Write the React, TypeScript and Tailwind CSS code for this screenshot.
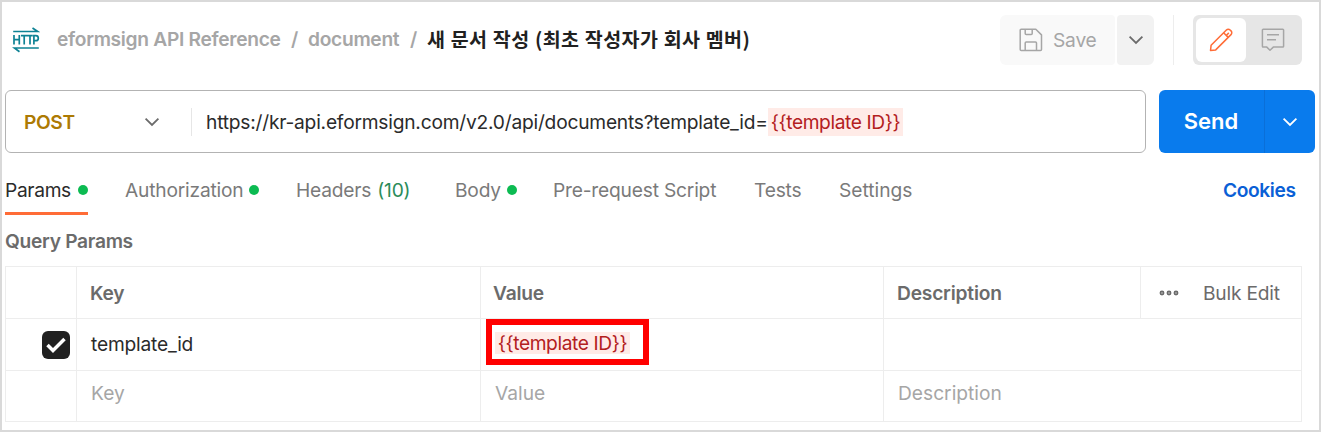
import type { ReactNode } from "react";

function Chevron({ className }: { className: string }) {
  return (
    <svg className={className} width="16" height="10" viewBox="0 0 16 10" fill="none" stroke="currentColor" strokeWidth="1.8">
      <path d="M1.6 1.6 8 8l6.4-6.4" />
    </svg>
  );
}

function HttpIcon() {
  return (
    <svg width="28" height="26" viewBox="0 0 28 26" fill="none" stroke="#0e8294" strokeWidth="1.7">
      <path d="M1.200 4.500h24.500L20.500 1M26.800 21H2.400L7.500 24.700" />
      <path d="M2 8v9.500M7.300 8v9.500M2 12.700h5.300M9 8.700h6.500M12.200 8.700v8.800M15.500 8.700h5.300M18 8.700v8.800M21.900 17.500V8.700h2a2.400 2.500 0 0 1 0 5h-2" />
    </svg>
  );
}

function SaveIcon() {
  return (
    <svg width="24" height="24" viewBox="0 0 24 24" fill="none" stroke="#a6a6a6" strokeWidth="1.5" strokeLinejoin="round">
      <path d="M1.200 2.200a1 1 0 0 1 1-1h14.600l5.700 5.700v14.600a1 1 0 0 1-1 1H2.200a1 1 0 0 1-1-1z" />
      <path d="M6.200 1.200v4.200a1 1 0 0 0 1 1h5a1 1 0 0 0 1-1V1.200M6.200 22.500v-7.600a1 1 0 0 1 1-1h9.300a1 1 0 0 1 1 1v7.600" />
    </svg>
  );
}

function PencilIcon() {
  return (
    <svg width="24" height="24" viewBox="0 0 24 24" fill="none" stroke="#ff6c37" strokeWidth="1.5" strokeLinejoin="round">
      <path d="M1.500 22.500l.6-5.200L17.400 2a2.600 2.600 0 0 1 3.700 0l.9.900a2.600 2.600 0 0 1 0 3.700L6.700 21.900z" />
      <path d="M14.600 4.800l4.600 4.600M17.500 7.200l2.300-2.300" />
    </svg>
  );
}

function CommentIcon() {
  return (
    <svg width="24" height="24" viewBox="0 0 24 24" fill="none" stroke="#a6a6a6" strokeWidth="1.500" strokeLinejoin="round">
      <path d="M2.200 1.300h19.600a.8.8 0 0 1 .8.8v16.200a.8.800 0 0 1-.8.800h-9.500L9 22.300l-3.200-3.200H2.200a.8.800 0 0 1-.8-.8V2.100a.8.800 0 0 1 .8-.8z" />
      <path d="M6 6.800h12M6 11.700h9" />
    </svg>
  );
}

function Dot() {
  return <span className="size-[10px] shrink-0 rounded-full bg-[#0cbb52]" />;
}

function Tab({ children, dot }: { children: ReactNode; dot?: boolean }) {
  return (
    <div className="flex h-[50px] items-center gap-[6px] whitespace-nowrap text-[#7a7a7a]">
      {children}
      {dot && <Dot />}
    </div>
  );
}

export default function App() {
  return (
    <div className="flex h-[432px] w-[1321px] flex-col overflow-hidden border-2 border-[#d9d9d9] bg-white pl-[3px] font-['Inter','Noto_Sans_CJK_KR',sans-serif] text-[19.2px] leading-6 tracking-[-0.2px] text-[#2b2b2b]">
      <header className="flex h-[88px] pr-[17px]">
        <div className="flex h-[75px] flex-1 items-center whitespace-nowrap font-semibold tracking-[-0.3px] text-[#a6a6a6]">
          <div className="w-[52px] pl-[7px]">
            <HttpIcon />
          </div>
          <span className="w-[234px] pb-px">eformsign API Reference</span>
          <span className="w-[17px] pb-px">/</span>
          <span className="w-[102px] pb-px">document</span>
          <span className="w-[17px] pb-px">/</span>
          <span className="pb-[2px] font-['Noto_Sans_CJK_KR',sans-serif] text-[19.5px] font-bold tracking-[0.4px] text-[#212121] [word-spacing:0.6px]">
            새 문서 작성 (최초 작성자가 회사 멤버)
          </span>
        </div>
        <div className="mt-[12.5px] flex h-[50px]">
          <button className="flex h-[50px] w-[115px] items-center gap-[10px] rounded-l-md rounded-r-sm bg-[#f9f9f9] pl-[19px] text-[#a6a6a6]">
            <SaveIcon />
            Save
          </button>
          <button className="ml-[2px] flex h-[50px] w-[37px] items-center justify-center rounded-l-sm rounded-r-md bg-[#f2f2f2]">
            <Chevron className="text-[#6b6b6b]" />
          </button>
          <div className="ml-[19px] h-[50px] w-px bg-[#ededed]" />
          <div className="ml-[19px] flex h-[50px] w-[109px] rounded-md bg-[#e6e6e6] p-[3px]">
            <div className="flex h-11 w-[50px] items-center justify-center rounded-md bg-white">
              <PencilIcon />
            </div>
            <div className="flex flex-1 items-center justify-center">
              <CommentIcon />
            </div>
          </div>
        </div>
      </header>

      <div className="flex h-[63px] gap-[13px] pr-[4px]">
        <div className="flex w-[1141px] items-center rounded-md border border-[#b3b3b3]">
          <span className="w-[138px] pl-[18px] font-semibold tracking-[-0.4px] text-[#ad7a03]">POST</span>
          <Chevron className="text-[#6b6b6b]" />
          <div className="ml-[31px] h-7 w-px bg-[#e6e6e6]" />
          <span className="ml-[14px] w-[562px] whitespace-nowrap tracking-[-0.22px]">
            https://kr-api.eformsign.com/v2.0/api/documents?template_id=
          </span>
          <span className="flex h-7 w-[135px] items-center justify-center whitespace-nowrap bg-[#ffebe7] tracking-[-0.4px] text-[#b3201e]">
            {"{{template ID}}"}
          </span>
        </div>
        <div className="flex w-[156px] rounded-md bg-[#097bed] text-white">
          <div className="flex w-[106px] items-center justify-center border-r border-[#0a6fd8] pb-[2px] pr-px text-[22px] font-semibold tracking-normal">
            Send
          </div>
          <div className="flex flex-1 items-center justify-center">
            <Chevron className="text-white" />
          </div>
        </div>
      </div>

      <nav className="grid h-[62px] grid-cols-[120px_171px_159px_98px_201px_85px_384px_80px] items-start pt-[12px]">
        <div className="flex h-[50px] w-[83px] items-center justify-between border-b-[3px] border-[#ff6c37] pt-[3px] tracking-[-0.35px]">
          Params
          <Dot />
        </div>
        <Tab dot>Authorization</Tab>
        <Tab>
          Headers<span className="text-[#2c8c5a]">(10)</span>
        </Tab>
        <Tab dot>Body</Tab>
        <Tab>Pre-request Script</Tab>
        <Tab>Tests</Tab>
        <div className="tracking-normal">
          <Tab>Settings</Tab>
        </div>
        <div className="flex h-[50px] items-center font-semibold tracking-[-0.4px] text-[#0a5fd6]">Cookies</div>
      </nav>

      <h2 className="h-[51px] pt-[14px] font-semibold tracking-[-0.3px] text-[#6b6b6b]">Query Params</h2>

      <div className="w-[1297px] border border-[#ededed]">
        <div className="grid h-[52px] grid-cols-[71px_404px_403px_257px_1fr] divide-x divide-[#ededed] border-b border-[#ededed] font-semibold text-[#6b6b6b]">
          <div />
          <div className="flex items-center pl-[13px]">Key</div>
          <div className="flex items-center pl-3">Value</div>
          <div className="flex items-center pl-[13px]">Description</div>
          <div className="flex items-center font-normal">
            <svg className="ml-[18px] mr-[24px]" width="20" height="6" viewBox="0 0 20 6" fill="#a6a6a6" stroke="#6b6b6b" strokeWidth="1.500">
              <circle cx="3" cy="3" r="1.700" />
              <circle cx="10" cy="3" r="1.700" />
              <circle cx="17" cy="3" r="1.700" />
            </svg>
            Bulk Edit
          </div>
        </div>
        <div className="grid h-[52px] grid-cols-[71px_404px_403px_1fr] divide-x divide-[#ededed] border-b border-[#ededed]">
          <div className="flex items-center pl-9">
            <div className="flex size-7 items-center justify-center rounded-md bg-[#212121]">
              <svg width="20" height="16" viewBox="0 0 20 16" fill="none" stroke="white" strokeWidth="3.500">
                <path d="M1.500 8l5.500 5.500L18.500 2" />
              </svg>
            </div>
          </div>
          <div className="flex items-center pb-[2px] pl-[14px]">template_id</div>
          <div className="flex items-start pl-[5px]">
            <div className="flex h-[46px] w-[163px] shrink-0 items-center border-[6px] border-[#ff0000] pl-[3px] pt-[2px]">
              <span className="flex h-[22px] w-[135px] items-center justify-center whitespace-nowrap bg-[#ffebe7] tracking-[-0.4px] text-[#b3201e]">
                {"{{template ID}}"}
              </span>
            </div>
          </div>
          <div />
        </div>
        <div className="grid h-[50px] grid-cols-[71px_404px_403px_1fr] divide-x divide-[#ededed] tracking-normal text-[#a6a6a6]">
          <div />
          <div className="pl-[14px] pt-[10px]">Key</div>
          <div className="pl-[14px] pt-[10px]">Value</div>
          <div className="pl-[14px] pt-[10px]">Description</div>
        </div>
      </div>
    </div>
  );
}
